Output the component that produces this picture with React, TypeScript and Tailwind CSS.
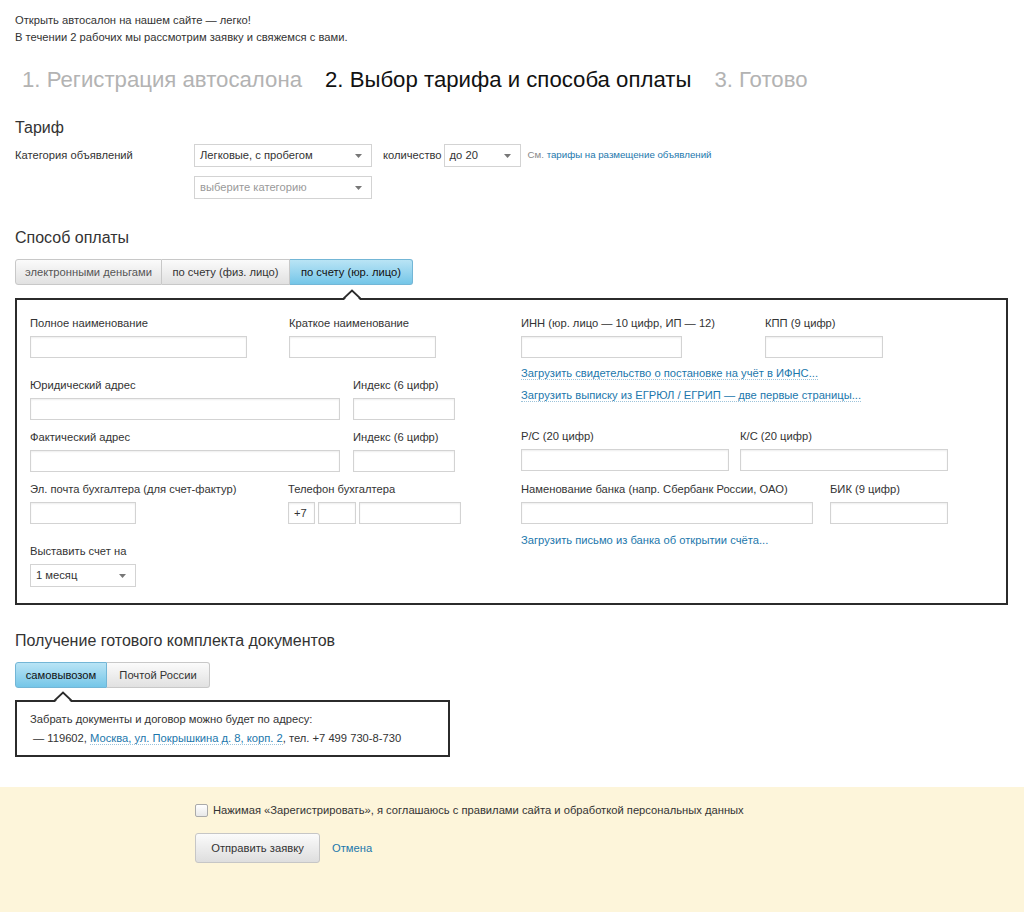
import React from "react";

function Arrow() {
  return (
    <svg width="7" height="4" viewBox="0 0 7 4" className="shrink-0">
      <polygon points="0,0 7,0 3.5,4" fill="#777" />
    </svg>
  );
}

function Select({ text, w, muted }: { text: string; w: string; muted?: boolean }) {
  return (
    <div
      className={`${w} h-[23px] border border-[#d3d3d3] bg-white flex items-center justify-between pl-[5px] pr-[9px] text-[11.2px] ${
        muted ? "text-[#999]" : "text-[#333]"
      }`}
    >
      <span>{text}</span>
      <Arrow />
    </div>
  );
}

function Input({ w, children }: { w: string; children?: React.ReactNode }) {
  return (
    <div
      className={`${w} h-[22px] border border-[#d3d3d3] bg-white shadow-[inset_0_1px_2px_rgba(0,0,0,0.07)] flex items-center pl-[5px] text-[11.2px] text-[#333]`}
    >
      {children}
    </div>
  );
}

function Label({ children }: { children: React.ReactNode }) {
  return <div className="text-[11.2px] leading-[14px] h-[14px] text-[#333] whitespace-nowrap">{children}</div>;
}

function Field({ label, fw, iw }: { label: string; fw: string; iw: string }) {
  return (
    <div className={`${fw} shrink-0`}>
      <Label>{label}</Label>
      <div className="mt-[6px]">
        <Input w={iw} />
      </div>
    </div>
  );
}

function Caret({ left }: { left: string }) {
  return (
    <svg width="18" height="11" viewBox="0 0 18 11" className={`absolute top-[-11px] ${left}`}>
      <polygon points="1,11 9,2.5 17,11" fill="#fff" />
      <polyline points="0,10 9,1.5 18,10" fill="none" stroke="#2b2b2b" strokeWidth="1.8" />
    </svg>
  );
}

function Link({ children }: { children: React.ReactNode }) {
  return (
    <span className="text-[#1b77ac] border-b border-dotted border-[#9cc3da] text-[11.2px] leading-[14px]">
      {children}
    </span>
  );
}

export default function App() {
  const tabBase = "h-[26px] flex items-center justify-center text-[11.2px] border";
  const tabOff = "bg-linear-to-b from-[#fbfbfb] to-[#e1e1e1] border-[#c8c8c8] text-[#333]";
  const tabOn = "bg-linear-to-b from-[#b9e4f5] to-[#74c6e8] border-[#73b6d6] text-[#111]";
  return (
    <div className="w-[1024px] min-h-[912px] bg-white font-['Liberation_Sans',Arial,sans-serif] text-[#333] flex flex-col">
      <div className="px-[15px] pt-[12px] text-[11.2px] leading-[17px]">
        <p>Открыть автосалон на нашем сайте — легко!</p>
        <p>В течении 2 рабочих мы рассмотрим заявку и свяжемся с вами.</p>
      </div>

      <div className="mt-[21px] pl-[22px] flex gap-[23px] text-[22.2px] leading-[26px] whitespace-nowrap">
        <span className="text-[#b3b3b3]">1. Регистрация автосалона</span>
        <span className="text-[#111]">2. Выбор тарифа и способа оплаты</span>
        <span className="text-[#b3b3b3]">3. Готово</span>
      </div>

      <div className="px-[15px]">
        <h2 className="mt-[25px] text-[16px] leading-[20px] text-[#333]">Тариф</h2>
        <div className="mt-[6px] flex items-center">
          <div className="w-[179px] text-[11.2px]">Категория объявлений</div>
          <Select text="Легковые, с пробегом" w="w-[178px]" />
          <span className="ml-[11px] mr-[2px] text-[11.2px]">количество</span>
          <Select text="до 20" w="w-[77px]" />
          <span className="ml-[7px] text-[9.7px] text-[#888]">
            См. <span className="text-[#1b77ac]">тарифы на размещение объявлений</span>
          </span>
        </div>
        <div className="mt-[9px] ml-[179px]">
          <Select text="выберите категорию" w="w-[178px]" muted />
        </div>

        <h2 className="mt-[29px] text-[16px] leading-[20px] text-[#333]">Способ оплаты</h2>
        <div className="mt-[11px] flex">
          <div className={`${tabBase} ${tabOff} w-[147px] rounded-l-[3px] text-[#555]`}>электронными деньгами</div>
          <div className={`${tabBase} ${tabOff} w-[128px] border-l-0`}>по счету (физ. лицо)</div>
          <div className={`${tabBase} ${tabOn} w-[123px] rounded-r-[3px] border-l-0`}>по счету (юр. лицо)</div>
        </div>

        <div className="relative mt-[13px] w-[993px] h-[307px] border-2 border-[#2b2b2b] flex pl-[13px] pt-[16px]">
          <Caret left="left-[326px]" />
          <div className="w-[491px] shrink-0">
            <div className="flex">
              <Field label="Полное наименование" fw="w-[259px]" iw="w-[217px]" />
              <Field label="Краткое наименование" fw="w-[147px]" iw="w-[147px]" />
            </div>
            <div className="flex mt-[20px]">
              <Field label="Юридический адрес" fw="w-[323px]" iw="w-[310px]" />
              <Field label="Индекс (6 цифр)" fw="w-[102px]" iw="w-[102px]" />
            </div>
            <div className="flex mt-[10px]">
              <Field label="Фактический адрес" fw="w-[323px]" iw="w-[310px]" />
              <Field label="Индекс (6 цифр)" fw="w-[102px]" iw="w-[102px]" />
            </div>
            <div className="flex mt-[10px]">
              <Field label="Эл. почта бухгалтера (для счет-фактур)" fw="w-[258px]" iw="w-[106px]" />
              <div>
                <Label>Телефон бухгалтера</Label>
                <div className="mt-[6px] flex gap-[3px]">
                  <Input w="w-[27px]">+7</Input>
                  <Input w="w-[38px]" />
                  <Input w="w-[102px]" />
                </div>
              </div>
            </div>
            <div className="mt-[20px]">
              <Label>Выставить счет на</Label>
              <div className="mt-[6px]">
                <Select text="1 месяц" w="w-[106px]" />
              </div>
            </div>
          </div>

          <div className="flex-1">
            <div className="flex">
              <Field label="ИНН (юр. лицо — 10 цифр, ИП — 12)" fw="w-[244px]" iw="w-[161px]" />
              <Field label="КПП (9 цифр)" fw="w-[118px]" iw="w-[118px]" />
            </div>
            <div className="mt-[7px] h-[14px] leading-[14px]">
              <Link>Загрузить свидетельство о постановке на учёт в ИФНС...</Link>
            </div>
            <div className="mt-[8px] h-[14px] leading-[14px]">
              <Link>Загрузить выписку из ЕГРЮЛ / ЕГРИП — две первые страницы...</Link>
            </div>
            <div className="flex mt-[28px]">
              <Field label="Р/С (20 цифр)" fw="w-[219px]" iw="w-[208px]" />
              <Field label="К/С (20 цифр)" fw="w-[208px]" iw="w-[208px]" />
            </div>
            <div className="flex mt-[11px]">
              <Field label="Наменование банка (напр. Сбербанк России, ОАО)" fw="w-[309px]" iw="w-[292px]" />
              <Field label="БИК (9 цифр)" fw="w-[118px]" iw="w-[118px]" />
            </div>
            <div className="mt-[8px] leading-[14px]">
              <span className="text-[#1b77ac] text-[11.2px]">Загрузить письмо из банка об открытии счёта...</span>
            </div>
          </div>
        </div>

        <h2 className="mt-[26px] text-[16px] leading-[20px] text-[#333]">Получение готового комплекта документов</h2>
        <div className="mt-[11px] flex">
          <div className={`${tabBase} ${tabOn} w-[92px] rounded-l-[3px]`}>самовывозом</div>
          <div className={`${tabBase} ${tabOff} w-[103px] rounded-r-[3px] border-l-0`}>Почтой России</div>
        </div>
        <div className="relative mt-[12px] w-[435px] h-[57px] border-2 border-[#2b2b2b] pl-[13px] pt-[8px] text-[11.2px] leading-[19px]">
          <Caret left="left-[37px]" />
          <p>Забрать документы и договор можно будет по адресу:</p>
          <p className="pl-[3px]">
            — 119602, <Link>Москва, ул. Покрышкина д. 8, корп. 2</Link>, тел. +7 499 730-8-730
          </p>
        </div>
      </div>

      <div className="mt-[30px] flex-1 bg-[#fdf5da] pl-[195px] pt-[15px] pb-[30px]">
        <div className="flex items-center h-[16px] text-[11.2px]">
          <div className="w-[13px] h-[13px] border border-[#aaa] rounded-[2px] bg-linear-to-b from-white to-[#e8e8e8]" />
          <span className="ml-[5px]">Нажимая «Зарегистрировать», я соглашаюсь с правилами сайта и обработкой персональных данных</span>
        </div>
        <div className="mt-[15px] flex items-center">
          <div className="w-[125px] h-[30px] rounded-[3px] border border-[#c6c6c6] bg-linear-to-b from-[#fbfbfb] to-[#dedede] flex items-center justify-center text-[11.2px] text-[#333]">
            Отправить заявку
          </div>
          <span className="ml-[12px] text-[11.2px] text-[#1b77ac]">Отмена</span>
        </div>
      </div>
    </div>
  );
}
